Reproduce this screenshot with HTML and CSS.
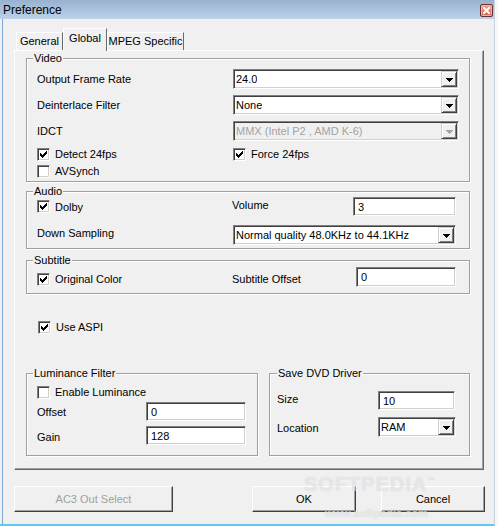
FILE: index.html
```html
<!DOCTYPE html>
<html>
<head>
<meta charset="utf-8">
<title>Preference</title>
<link rel="stylesheet" href="styles.css">
</head>
<body>
<div class="window">
  <div class="titlebar">
    <span class="title">Preference</span>
    <svg class="close" width="13" height="13" viewBox="0 0 13 13">
      <defs>
        <linearGradient id="cg" x1="0" y1="0" x2="0" y2="1">
          <stop offset="0" stop-color="#eba293"/>
          <stop offset="1" stop-color="#cf5e4d"/>
        </linearGradient>
      </defs>
      <rect x="0.5" y="0.5" width="12" height="12" rx="1.5" fill="url(#cg)" stroke="#6b2f2f"/>
      <rect x="1.5" y="1.5" width="10" height="10" rx="1" fill="none" stroke="#f3c4bb" stroke-width="0.8"/>
      <path d="M4 4 L9 9 M9 4 L4 9" stroke="#fff" stroke-width="2" stroke-linecap="square"/>
    </svg>
  </div>
  <div class="client">
    <div class="tabs">
      <div class="tab t-general">General</div>
      <div class="tab t-global active">Global</div>
      <div class="tab t-mpeg">MPEG Specific</div>
    </div>
    <div class="panel">
      <div class="group g-video">
        <span class="legend">Video</span>
        <div class="row h20 mt10">
          <span class="lbl w196">Output Frame Rate</span>
          <div class="combo w226"><span class="val">24.0</span><span class="drop"><svg width="7" height="4" viewBox="0 0 7 4" shape-rendering="crispEdges"><rect x="0" y="0" width="7" height="1"/><rect x="1" y="1" width="5" height="1"/><rect x="2" y="2" width="3" height="1"/><rect x="3" y="3" width="1" height="1"/></svg></span></div>
        </div>
        <div class="row h20 mt6">
          <span class="lbl w196">Deinterlace Filter</span>
          <div class="combo w226"><span class="val">None</span><span class="drop"><svg width="7" height="4" viewBox="0 0 7 4" shape-rendering="crispEdges"><rect x="0" y="0" width="7" height="1"/><rect x="1" y="1" width="5" height="1"/><rect x="2" y="2" width="3" height="1"/><rect x="3" y="3" width="1" height="1"/></svg></span></div>
        </div>
        <div class="row h20 mt6">
          <span class="lbl w196">IDCT</span>
          <div class="combo w226 disabled"><span class="val">MMX (Intel P2 , AMD K-6)</span><span class="drop"><svg width="7" height="4" viewBox="0 0 7 4" shape-rendering="crispEdges"><rect x="0" y="0" width="7" height="1"/><rect x="1" y="1" width="5" height="1"/><rect x="2" y="2" width="3" height="1"/><rect x="3" y="3" width="1" height="1"/></svg></span></div>
        </div>
        <div class="row h14 mt6">
          <label class="cb w196"><span class="box"><svg width="7" height="7" viewBox="0 0 7 7" shape-rendering="crispEdges"><rect x="0" y="2" width="1" height="3"/><rect x="1" y="3" width="1" height="3"/><rect x="2" y="4" width="1" height="3"/><rect x="3" y="3" width="1" height="3"/><rect x="4" y="2" width="1" height="3"/><rect x="5" y="1" width="1" height="3"/><rect x="6" y="0" width="1" height="3"/></svg></span>Detect 24fps</label>
          <label class="cb"><span class="box"><svg width="7" height="7" viewBox="0 0 7 7" shape-rendering="crispEdges"><rect x="0" y="2" width="1" height="3"/><rect x="1" y="3" width="1" height="3"/><rect x="2" y="4" width="1" height="3"/><rect x="3" y="3" width="1" height="3"/><rect x="4" y="2" width="1" height="3"/><rect x="5" y="1" width="1" height="3"/><rect x="6" y="0" width="1" height="3"/></svg></span>Force 24fps</label>
        </div>
        <div class="row h14 mt3">
          <label class="cb"><span class="box"></span>AVSynch</label>
        </div>
      </div>

      <div class="group g-audio">
        <span class="legend">Audio</span>
        <div class="row h19 mt5">
          <label class="cb w195"><span class="box"><svg width="7" height="7" viewBox="0 0 7 7" shape-rendering="crispEdges"><rect x="0" y="2" width="1" height="3"/><rect x="1" y="3" width="1" height="3"/><rect x="2" y="4" width="1" height="3"/><rect x="3" y="3" width="1" height="3"/><rect x="4" y="2" width="1" height="3"/><rect x="5" y="1" width="1" height="3"/><rect x="6" y="0" width="1" height="3"/></svg></span>Dolby</label>
          <span class="lbl w121 up2">Volume</span>
          <div class="tb w103 h19">3</div>
        </div>
        <div class="row h20 mt9">
          <span class="lbl w196 up2">Down Sampling</span>
          <div class="combo w223"><span class="val">Normal quality 48.0KHz to 44.1KHz</span><span class="drop"><svg width="7" height="4" viewBox="0 0 7 4" shape-rendering="crispEdges"><rect x="0" y="0" width="7" height="1"/><rect x="1" y="1" width="5" height="1"/><rect x="2" y="2" width="3" height="1"/><rect x="3" y="3" width="1" height="1"/></svg></span></div>
        </div>
      </div>

      <div class="group g-subtitle">
        <span class="legend">Subtitle</span>
        <div class="row h20">
          <label class="cb w195 down2"><span class="box"><svg width="7" height="7" viewBox="0 0 7 7" shape-rendering="crispEdges"><rect x="0" y="2" width="1" height="3"/><rect x="1" y="3" width="1" height="3"/><rect x="2" y="4" width="1" height="3"/><rect x="3" y="3" width="1" height="3"/><rect x="4" y="2" width="1" height="3"/><rect x="5" y="1" width="1" height="3"/><rect x="6" y="0" width="1" height="3"/></svg></span>Original Color</label>
          <span class="lbl w124 down2">Subtitle Offset</span>
          <div class="tb w100 h20">0</div>
        </div>
      </div>

      <div class="row h14 aspi">
        <label class="cb"><span class="box"><svg width="7" height="7" viewBox="0 0 7 7" shape-rendering="crispEdges"><rect x="0" y="2" width="1" height="3"/><rect x="1" y="3" width="1" height="3"/><rect x="2" y="4" width="1" height="3"/><rect x="3" y="3" width="1" height="3"/><rect x="4" y="2" width="1" height="3"/><rect x="5" y="1" width="1" height="3"/><rect x="6" y="0" width="1" height="3"/></svg></span>Use ASPI</label>
      </div>

      <div class="bottom">
        <div class="group g-lum">
          <span class="legend">Luminance Filter</span>
          <div class="row h14 mt11">
            <label class="cb"><span class="box"></span>Enable Luminance</label>
          </div>
          <div class="row h19 mt3">
            <span class="lbl w109">Offset</span>
            <div class="tb w100 h19">0</div>
          </div>
          <div class="row h19 mt5">
            <span class="lbl w109 down1">Gain</span>
            <div class="tb w100 h19">128</div>
          </div>
        </div>
        <div class="group g-save">
          <span class="legend">Save DVD Driver</span>
          <div class="row h19 mt17">
            <span class="lbl w101 up2">Size</span>
            <div class="tb w77 h19">10</div>
          </div>
          <div class="row h20 mt7">
            <span class="lbl w101 down1">Location</span>
            <div class="combo w78"><span class="val">RAM</span><span class="drop"><svg width="7" height="4" viewBox="0 0 7 4" shape-rendering="crispEdges"><rect x="0" y="0" width="7" height="1"/><rect x="1" y="1" width="5" height="1"/><rect x="2" y="2" width="3" height="1"/><rect x="3" y="3" width="1" height="1"/></svg></span></div>
          </div>
        </div>
      </div>
    </div>

    <div class="buttons">
      <div class="btn b-ac3 disabled">AC3 Out Select</div>
      <div class="btn b-ok">OK</div>
      <div class="btn b-cancel">Cancel</div>
    </div>
  </div>
  <div class="watermark">
    <div class="wm-big">SOFTPEDIA<span class="wm-tm">™</span></div>
    <div class="wm-small">www.softpedia.com</div>
  </div>
</div>
</body>
</html>
```

FILE: styles.css
```css
* { box-sizing: border-box; }
html, body { margin: 0; padding: 0; }
body {
  width: 498px;
  height: 526px;
  overflow: hidden;
  background: #f7f8fa;
  font-family: "Liberation Sans", Arial, sans-serif;
  font-size: 11px;
  color: #000;
}
.window {
  position: relative;
  width: 495px;
  height: 526px;
  background: #f0f0f0;
  border-right: 1px solid #c6d1dd;
  border-bottom: 2px solid #63c7ef;
  display: flex;
  flex-direction: column;
}
.titlebar {
  height: 19px;
  flex: none;
  background: linear-gradient(#98b1ce, #bcd2ea);
  display: flex;
  align-items: center;
  justify-content: space-between;
  padding: 0 1px 0 3px;
}
.title { font-size: 12px; line-height: 19px; position: relative; top: 1px; }
.close { display: block; margin-top: 1px; }

.client {
  flex: 1;
  margin-left: 2px;
  border-left: 1px solid #7ca6d6;
}

/* tabs */
.tabs {
  display: flex;
  align-items: flex-end;
  height: 22px;
  margin: 9px 0 0 13px;
}
.tab {
  height: 18px;
  border: 1px solid;
  border-bottom: none;
  border-color: #fff #696969 #fff #fff;
  text-align: center;
  line-height: 17px;
  background: #f0f0f0;
}
.t-general { width: 47px; }
.t-global { width: 44px; }
.t-mpeg { width: 77px; }
.tab.active {
  position: relative;
  z-index: 1;
  height: 23px;
  margin-bottom: -1px;
  line-height: 19px;
}

.panel {
  width: 470px;
  height: 420px;
  margin-left: 11px;
  border: 1px solid;
  border-color: #fff #696969 #696969 #fff;
  box-shadow: inset -1px -1px 0 #a0a0a0;
  padding: 7px 13px 0 11px;
}

/* group boxes */
.group {
  position: relative;
  border: 1px solid #a0a0a0;
  box-shadow: 1px 1px 0 #fff, inset 1px 1px 0 #fff;
  padding: 0 10px;
}
.legend {
  position: absolute;
  top: -8px;
  left: 6px;
  padding: 0 1px;
  line-height: 14px;
  background: #f0f0f0;
}
.g-video { padding-bottom: 3px; }
.g-audio { margin-top: 9px; padding-bottom: 3px; }
.g-subtitle { margin-top: 11px; padding-top: 6px; padding-bottom: 6px; }
.aspi { margin-top: 26px; padding-left: 12px; }
.bottom {
  display: flex;
  gap: 11px;
  margin-top: 39px;
}
.g-lum { width: 232px; padding-bottom: 10px; }
.g-save { width: 201px; padding-left: 7px; padding-bottom: 18px; }
.g-save .legend { left: 7px; }

/* rows */
.row { display: flex; align-items: center; }
.h14 { height: 14px; }
.h19 { height: 19px; }
.h20 { height: 20px; }
.mt3 { margin-top: 3px; }
.mt5 { margin-top: 5px; }
.mt6 { margin-top: 6px; }
.mt7 { margin-top: 7px; }
.mt9 { margin-top: 9px; }
.mt10 { margin-top: 10px; }
.mt11 { margin-top: 11px; }
.mt17 { margin-top: 17px; }
.up2 { position: relative; top: -2px; }
.down1 { position: relative; top: 1px; }
.down2 { position: relative; top: 2px; }

.lbl { flex: none; white-space: nowrap; }
.w77 { width: 77px; }
.w78 { width: 78px; }
.w100 { width: 100px; }
.w101 { width: 101px; }
.w103 { width: 103px; }
.w109 { width: 109px; }
.w121 { width: 121px; }
.w124 { width: 124px; }
.w195 { width: 195px; }
.w196 { width: 196px; }
.w223 { width: 223px; }
.w226 { width: 226px; }

/* checkbox */
.cb {
  display: flex;
  align-items: center;
  flex: none;
  white-space: nowrap;
}
.box {
  position: relative;
  width: 13px;
  height: 13px;
  flex: none;
  margin-right: 5px;
  background: #fff;
  border: 1px solid;
  border-color: #808080 #fff #fff #808080;
  box-shadow: inset 1px 1px 0 #404040, inset -1px -1px 0 #d4d0c8;
}
.box svg {
  position: absolute;
  left: 2px;
  top: 2px;
  fill: #000;
}

/* text box */
.tb {
  flex: none;
  display: flex;
  align-items: center;
  padding-left: 4px;
  background: #fff;
  border: 1px solid;
  border-color: #808080 #fff #fff #808080;
  box-shadow: inset 1px 1px 0 #404040, inset -1px -1px 0 #d4d0c8;
}

/* combo box */
.combo {
  flex: none;
  height: 20px;
  display: flex;
  align-items: center;
  padding: 1px 1px 1px 2px;
  background: #fff;
  border: 1px solid;
  border-color: #808080 #fff #fff #808080;
  box-shadow: inset 1px 1px 0 #404040, inset -1px -1px 0 #d4d0c8;
}
.combo .val { white-space: nowrap; overflow: hidden; }
.drop {
  margin-left: auto;
  flex: none;
  width: 16px;
  height: 16px;
  display: flex;
  align-items: center;
  justify-content: center;
  background: #f0f0f0;
  border: 1px solid;
  border-color: #d4d0c8 #404040 #404040 #d4d0c8;
  box-shadow: inset 1px 1px 0 #fff, inset -1px -1px 0 #808080;
}
.drop svg { fill: #000; margin-top: 1px; }
.combo.disabled { background: #f0f0f0; color: #a3a3a3; }
.combo.disabled .drop svg { fill: #a3a3a3; }

/* buttons */
.buttons {
  display: flex;
  margin: 16px 0 0 11px;
}
.btn {
  height: 26px;
  display: flex;
  align-items: center;
  justify-content: center;
  background: #f0f0f0;
  border: 1px solid;
  border-color: #fff #404040 #404040 #fff;
  box-shadow: inset -1px -1px 0 #a0a0a0;
}
.b-ac3 { width: 159px; }
.b-ok { width: 104px; margin-left: 79px; }
.b-cancel { width: 104px; margin-left: 25px; }
.btn.disabled { color: #a0a0a0; }

/* watermark overlay */
.watermark {
  position: absolute;
  left: 304px;
  top: 477px;
  pointer-events: none;
  color: rgba(255, 255, 255, 0.55);
  text-shadow: 0 0 1px rgba(150, 150, 150, 0.45);
  font-weight: bold;
}
.wm-big {
  font-size: 20px;
  letter-spacing: 1px;
  line-height: 15px;
  height: 15px;
  overflow: visible;
}
.wm-tm { font-size: 8px; vertical-align: top; line-height: 8px; }
.wm-small {
  font-size: 11px;
  margin-left: 21px;
  margin-top: 15px;
  line-height: 12px;
}
```
